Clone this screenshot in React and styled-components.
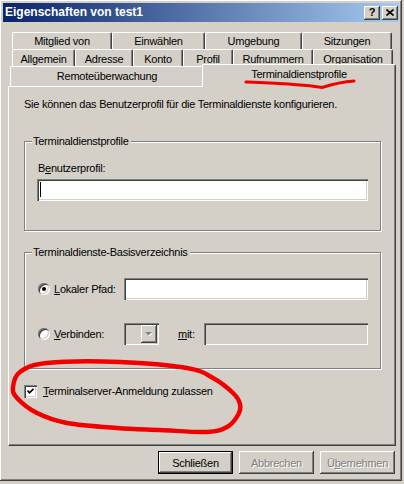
import React from 'react'
import styled, { createGlobalStyle, css } from 'styled-components'

const GlobalStyle = createGlobalStyle`
  html, body {
    margin: 0;
    padding: 0;
    background: #d4d0c8;
  }
  body {
    font-family: "Liberation Sans", Arial, sans-serif;
    font-size: 11px;
    color: #000;
  }
  * { box-sizing: border-box; }
`

const raised = 'inset -1px -1px #404040, inset 1px 1px #fff, inset -2px -2px #808080, inset 2px 2px #d4d0c8'
const sunken = 'inset 1px 1px #808080, inset 2px 2px #404040, inset -1px -1px #fff, inset -2px -2px #d4d0c8'

const Window = styled.div`
  position: relative;
  width: 402px;
  height: 481px;
  padding: 3px;
  background: #d4d0c8;
  display: flex;
  flex-direction: column;
  box-shadow: ${raised};
  letter-spacing: -0.25px;
  line-height: 13px;
`

const TitleBar = styled.div`
  height: 19px;
  display: flex;
  align-items: center;
  padding: 0 1px 0 2px;
  background: linear-gradient(to right, #0a246a, #a6caf0);
  color: #fff;
  font-weight: bold;
  font-size: 12px;
  letter-spacing: 0;
`

const Title = styled.span`
  flex: 1;
`

const CaptionButton = styled.div`
  width: 16px;
  height: 14px;
  margin-left: ${p => p.gap || 0}px;
  background: #d4d0c8;
  box-shadow: inset -1px -1px #404040, inset 1px 1px #fff, inset -2px -2px #808080;
  display: flex;
  align-items: center;
  justify-content: center;
  color: #000;
  font-size: 11px;
  font-weight: bold;
  padding-bottom: 1px;
`

const Body = styled.div`
  flex: 1;
  display: flex;
  flex-direction: column;
  padding: 10px 3px 0 5px;
`

const TabRow = styled.div`
  display: flex;
  height: ${p => p.h}px;
  margin-left: ${p => p.inset}px;
`

const Tab = styled.div`
  width: ${p => p.w}px;
  height: ${p => p.h}px;
  flex-shrink: 0;
  background: #d4d0c8;
  border-top: 1px solid #fff;
  border-left: 1px solid #fff;
  border-right: 1px solid #404040;
  box-shadow: inset -1px 0 #808080;
  border-radius: 2px 2px 0 0;
  display: flex;
  align-items: center;
  justify-content: center;
  padding-top: ${p => p.nudge || 0}px;
  white-space: nowrap;
  ${p => p.active && css`
    position: relative;
    z-index: 1;
    width: ${p.w + 4}px;
    height: ${p.h + 3}px;
    margin: -2px -2px -1px -2px;
    padding-bottom: 3px;
  `}
`

const Panel = styled.div`
  height: 360px;
  border: 1px solid;
  border-color: #fff #404040 #404040 #fff;
  box-shadow: inset -1px -1px #808080;
  padding: 11px 14px 0 15px;
  display: flex;
  flex-direction: column;
`

const Text = styled.div`
  line-height: 13px;
  margin-left: ${p => p.ml || 0}px;
  margin-top: ${p => p.mt || 0}px;
  white-space: nowrap;
`

const GroupBox = styled.div`
  height: ${p => p.h}px;
  margin-top: ${p => p.mt}px;
  border: 1px solid #808080;
  box-shadow: 1px 1px 0 #fff, inset 1px 1px 0 #fff;
  padding: 0 12px;
  display: flex;
  flex-direction: column;
`

const Legend = styled.span`
  align-self: flex-start;
  margin: -7px 0 0 -5px;
  padding: 0 2px 0 1px;
  background: #d4d0c8;
  line-height: 13px;
`

const Field = styled.div`
  height: 22px;
  flex: ${p => (p.grow ? 1 : 'none')};
  margin-top: ${p => p.mt || 0}px;
  background: ${p => (p.disabled ? '#d4d0c8' : '#fff')};
  box-shadow: ${sunken};
  padding: 3px 3px;
`

const Caret = styled.span`
  display: block;
  width: 1px;
  height: 15px;
  background: #000;
`

const OptionRow = styled.div`
  display: flex;
  align-items: center;
  margin-top: ${p => p.mt}px;
`

const Radio = styled.span`
  width: 12px;
  height: 12px;
  flex-shrink: 0;
  margin: 0 4px 0 1px;
  border-radius: 50%;
  background: #fff;
  box-shadow: inset 1px 1px #808080, inset -1px -1px #fff, inset 2px 2px #404040, inset -2px -2px #d4d0c8;
  display: flex;
  align-items: center;
  justify-content: center;
  &::after {
    content: '';
    width: 4px;
    height: 4px;
    border-radius: 50%;
    background: ${p => (p.checked ? '#000' : 'transparent')};
  }
`

const OptionLabel = styled.span`
  width: ${p => p.w}px;
  flex-shrink: 0;
  white-space: nowrap;
  margin-left: ${p => p.ml || 0}px;
`

const Combo = styled.div`
  width: 35px;
  height: 22px;
  flex-shrink: 0;
  padding: 2px;
  display: flex;
  justify-content: flex-end;
  background: #d4d0c8;
  box-shadow: ${sunken};
`

const ComboButton = styled.div`
  width: 16px;
  height: 100%;
  background: #d4d0c8;
  box-shadow: inset -1px -1px #404040, inset 1px 1px #fff, inset -2px -2px #808080;
  display: flex;
  align-items: center;
  justify-content: center;
`

const CheckRow = styled.div`
  display: flex;
  align-items: center;
  margin-top: 16px;
`

const CheckBox = styled.span`
  width: 13px;
  height: 13px;
  flex-shrink: 0;
  margin-right: 6px;
  background: #fff;
  box-shadow: ${sunken};
  display: flex;
  align-items: center;
  justify-content: center;
`

const ButtonRow = styled.div`
  display: flex;
  justify-content: flex-end;
  gap: 6px;
  margin: 5px 1px 0 0;
`

const Button = styled.button`
  width: 75px;
  height: 23px;
  padding: 0;
  border: none;
  font-family: inherit;
  font-size: 11px;
  letter-spacing: inherit;
  background: #d4d0c8;
  color: #000;
  box-shadow: ${raised};
  ${p => p.primary && css`
    border: 1px solid #000;
    box-shadow: inset -1px -1px #404040, inset 1px 1px #fff, inset -2px -2px #808080;
  `}
  ${p => p.disabled && css`
    color: #808080;
    text-shadow: 1px 1px #fff;
  `}
`

const Marks = styled.svg`
  position: absolute;
  top: 0;
  left: 0;
  z-index: 5;
  pointer-events: none;
`

// smooth closed curve through the hand-drawn points
const smooth = pts => {
  const n = pts.length
  let d = `M${pts[0][0]} ${pts[0][1]}`
  for (let i = 0; i < n; i++) {
    const p0 = pts[(i - 1 + n) % n]
    const p1 = pts[i]
    const p2 = pts[(i + 1) % n]
    const p3 = pts[(i + 2) % n]
    const c1 = [p1[0] + (p2[0] - p0[0]) / 6, p1[1] + (p2[1] - p0[1]) / 6]
    const c2 = [p2[0] - (p3[0] - p1[0]) / 6, p2[1] - (p3[1] - p1[1]) / 6]
    d += ` C${c1[0]} ${c1[1]} ${c2[0]} ${c2[1]} ${p2[0]} ${p2[1]}`
  }
  return d
}

const loop = smooth([
  [20, 372], [47, 363], [120, 362], [187, 368], [213, 378], [233, 393], [240, 404],
  [238, 415], [227, 427], [207, 432], [160, 430], [117, 428], [67, 423], [37, 413],
  [17, 398], [13, 387],
])

const rowOne = [['Mitglied von', 100], ['Einwählen', 93], ['Umgebung', 97], ['Sitzungen', 90]]
const rowTwo = [['Allgemein', 63], ['Adresse', 58], ['Konto', 50], ['Profil', 50], ['Rufnummern', 80], ['Organisation', 80]]

const App = () => {
  return (
    <Window>
      <GlobalStyle />
      <TitleBar>
        <Title>Eigenschaften von test1</Title>
        <CaptionButton>?</CaptionButton>
        <CaptionButton gap={2}>
          <svg width="8" height="7" viewBox="0 0 8 7">
            <path d="M0.5 0.5 L7.5 6.5 M7.5 0.5 L0.5 6.5" stroke="#000" strokeWidth="1.6" fill="none" />
          </svg>
        </CaptionButton>
      </TitleBar>

      <Body>
        <TabRow h={17} inset={4}>
          {rowOne.map(([t, w]) => (
            <Tab key={t} w={w} h={17}>{t}</Tab>
          ))}
        </TabRow>
        <TabRow h={17} inset={4}>
          {rowTwo.map(([t, w]) => (
            <Tab key={t} w={w} h={17} nudge={2}>{t}</Tab>
          ))}
        </TabRow>
        <TabRow h={20} inset={2}>
          <Tab w={194} h={20}>Remoteüberwachung</Tab>
          <Tab w={190} h={20} active>Terminaldienstprofile</Tab>
        </TabRow>

        <Panel>
          <Text>Sie können das Benutzerprofil für die Terminaldienste konfigurieren.</Text>

          <GroupBox h={90} mt={30}>
            <Legend>Terminaldienstprofile</Legend>
            <Text ml={1} mt={14}>B<u>e</u>nutzerprofil:</Text>
            <Field mt={4}>
              <Caret />
            </Field>
          </GroupBox>

          <GroupBox h={117} mt={21}>
            <Legend>Terminaldienste-Basisverzeichnis</Legend>
            <OptionRow mt={19}>
              <Radio checked />
              <OptionLabel w={70}><u>L</u>okaler Pfad:</OptionLabel>
              <Field grow />
            </OptionRow>
            <OptionRow mt={23}>
              <Radio />
              <OptionLabel w={70}><u>V</u>erbinden:</OptionLabel>
              <Combo>
                <ComboButton>
                  <svg width="8" height="5" viewBox="0 0 8 5">
                    <path d="M1 1 h7 l-3.5 3.5 z" fill="#fff" />
                    <path d="M0 0 h7 l-3.5 3.5 z" fill="#808080" />
                  </svg>
                </ComboButton>
              </Combo>
              <OptionLabel w={26} ml={19}><u>m</u>it:</OptionLabel>
              <Field grow disabled />
            </OptionRow>
          </GroupBox>

          <CheckRow>
            <CheckBox>
              <svg width="7" height="7" viewBox="0 0 7 7">
                <path d="M0.5 2.5 L2.5 4.8 L6.5 0.8" stroke="#000" strokeWidth="1.8" fill="none" />
              </svg>
            </CheckBox>
            <Text><u>T</u>erminalserver-Anmeldung zulassen</Text>
          </CheckRow>
        </Panel>

        <ButtonRow>
          <Button primary>Schließen</Button>
          <Button disabled>Abbrechen</Button>
          <Button disabled>Ü<u>b</u>ernehmen</Button>
        </ButtonRow>
      </Body>

      <Marks width="404" height="484" viewBox="0 0 404 484">
        <path
          d="M246 82 C 270 83, 295 84, 315 86.5 L 322 87.5 C 330 85, 340 82, 354 81"
          stroke="#f20000" strokeWidth="3" fill="none" strokeLinecap="round"
        />
        <path d={loop} stroke="#f20000" strokeWidth="4.5" fill="none" strokeLinejoin="round" />
      </Marks>
    </Window>
  )
}

export default App
